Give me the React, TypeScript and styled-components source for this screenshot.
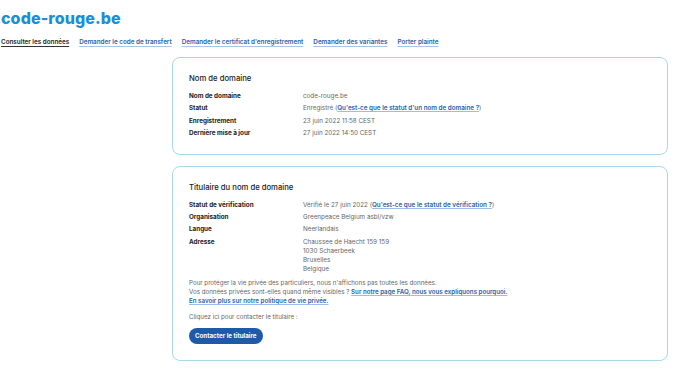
import styled, { createGlobalStyle } from 'styled-components'

const GlobalStyle = createGlobalStyle`
  html, body {
    margin: 0;
    padding: 0;
    background: #fff;
  }
  body {
    font-family: Inter, "Liberation Sans", sans-serif;
    color: #555;
  }
`

const Page = styled.div`
  width: 680px;
  min-height: 371px;
`

const Header = styled.header`
  padding: 7px 0 0 1px;
`

const SiteTitle = styled.h1`
  margin: 0;
  font-size: 16px;
  font-weight: 800;
  letter-spacing: 0.1px;
  color: #1a8fd3;
  line-height: 22px;
`

const Nav = styled.nav`
  display: flex;
  gap: 10px;
  margin-top: 9px;
`

const NavLink = styled.a<{ $active?: boolean }>`
  font-size: 6.3px;
  font-weight: 600;
  line-height: 9px;
  color: ${p => (p.$active ? '#222' : '#2b5fa8')};
  text-decoration: underline;
  text-decoration-color: ${p => (p.$active ? '#333' : '#a8c4e6')};
  text-underline-offset: 1.5px;
  cursor: pointer;
`

const Main = styled.main`
  display: grid;
  grid-template-columns: 172px 496px;
  margin-top: 10px;
`

const Cards = styled.div`
  grid-column: 2;
  display: flex;
  flex-direction: column;
  gap: 11px;
`

const Card = styled.section`
  border: 1px solid #a9d7ea;
  border-radius: 8px;
  padding: 15px 16px 16px;
`

const CardTitle = styled.h2`
  margin: 0 0 7px;
  font-size: 7.7px;
  font-weight: 500;
  line-height: 12px;
  color: #222;
`

const Rows = styled.div`
  display: grid;
  grid-template-columns: 114px 1fr;
  row-gap: 3.3px;
`

const Label = styled.div`
  font-size: 6.3px;
  font-weight: 700;
  line-height: 9px;
  color: #222;
`

const Value = styled.div`
  font-size: 6.3px;
  line-height: 9px;
  color: #666;
`

const Link = styled.a`
  color: #2b5fa8;
  font-weight: 600;
  text-decoration: underline;
  text-decoration-color: #9cbde6;
  text-underline-offset: 1.2px;
  cursor: pointer;
`

const Paragraph = styled.p<{ $gap?: number }>`
  margin: ${p => p.$gap ?? 0}px 0 0;
  font-size: 6.2px;
  line-height: 9px;
  color: #666;
`

const Button = styled.button`
  display: block;
  margin-top: 7px;
  border: none;
  border-radius: 8px;
  background: #1d5aa7;
  color: #fff;
  font-family: inherit;
  font-size: 6.2px;
  font-weight: 700;
  height: 16px;
  padding: 0 6px;
  cursor: pointer;
`

const domainRows: [string, React.ReactNode][] = [
  ['Nom de domaine', 'code-rouge.be'],
  [
    'Statut',
    <>
      Enregistré (<Link>Qu'est-ce que le statut d'un nom de domaine ?</Link>)
    </>,
  ],
  ['Enregistrement', '23 juin 2022 11:58 CEST'],
  ['Dernière mise à jour', '27 juin 2022 14:50 CEST'],
]

const holderRows: [string, React.ReactNode][] = [
  [
    'Statut de vérification',
    <>
      Vérifié le 27 juin 2022 (<Link>Qu'est-ce que le statut de vérification ?</Link>)
    </>,
  ],
  ['Organisation', 'Greenpeace Belgium asbl/vzw'],
  ['Langue', 'Néerlandais'],
  [
    'Adresse',
    <>
      Chaussee de Haecht 159 159
      <br />
      1030 Schaerbeek
      <br />
      Bruxelles
      <br />
      Belgique
    </>,
  ],
]

const InfoRows: React.FC<{ rows: [string, React.ReactNode][] }> = ({ rows }) => (
  <Rows>
    {rows.map(([label, value]) => [
      <Label key={label + '-l'}>{label}</Label>,
      <Value key={label + '-v'}>{value}</Value>,
    ])}
  </Rows>
)

const App: React.FC = () => {
  return (
    <Page>
      <GlobalStyle />
      <Header>
        <SiteTitle>code-rouge.be</SiteTitle>
        <Nav>
          <NavLink $active>Consulter les données</NavLink>
          <NavLink>Demander le code de transfert</NavLink>
          <NavLink>Demander le certificat d'enregistrement</NavLink>
          <NavLink>Demander des variantes</NavLink>
          <NavLink>Porter plainte</NavLink>
        </Nav>
      </Header>
      <Main>
        <Cards>
          <Card>
            <CardTitle>Nom de domaine</CardTitle>
            <InfoRows rows={domainRows} />
          </Card>
          <Card>
            <CardTitle>Titulaire du nom de domaine</CardTitle>
            <InfoRows rows={holderRows} />
            <Paragraph $gap={4}>
              Pour protéger la vie privée des particuliers, nous n'affichons pas toutes les données.
              <br />
              Vos données privées sont-elles quand même visibles ?{' '}
              <Link>Sur notre page FAQ, nous vous expliquons pourquoi.</Link>
              <br />
              <Link>En savoir plus sur notre politique de vie privée.</Link>
            </Paragraph>
            <Paragraph $gap={7}>Cliquez ici pour contacter le titulaire :</Paragraph>
            <Button>Contacter le titulaire</Button>
          </Card>
        </Cards>
      </Main>
    </Page>
  )
}

export default App
